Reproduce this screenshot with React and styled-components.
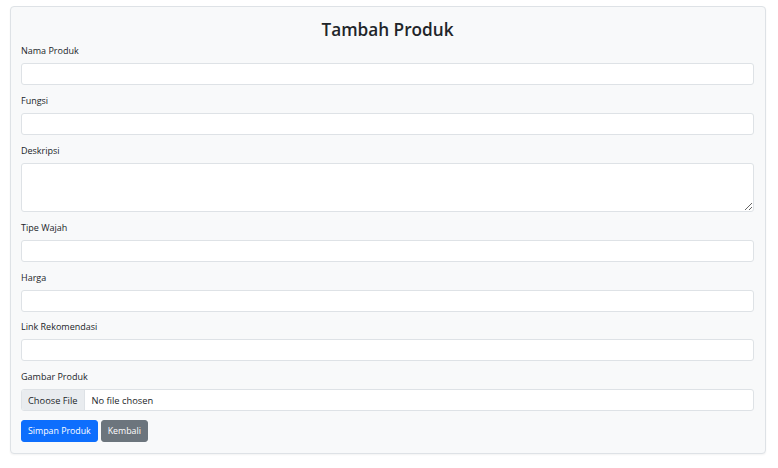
import React from 'react'
import styled, { createGlobalStyle } from 'styled-components'

const fields = [
  { id: 'nama', label: 'Nama Produk' },
  { id: 'fungsi', label: 'Fungsi' },
  { id: 'deskripsi', label: 'Deskripsi', textarea: true },
  { id: 'tipe', label: 'Tipe Wajah' },
  { id: 'harga', label: 'Harga' },
  { id: 'link', label: 'Link Rekomendasi' },
]

export default function App() {
  return (
    <>
      <GlobalStyle />
      <Page>
        <Card>
          <Title>Tambah Produk</Title>
          {fields.map((f) => (
            <Field key={f.id}>
              <Label htmlFor={f.id}>{f.label}</Label>
              {f.textarea ? <TextArea id={f.id} /> : <Input id={f.id} type='text' />}
            </Field>
          ))}
          <Field>
            <Label htmlFor='gambar'>Gambar Produk</Label>
            <FileInput id='gambar' type='file' />
          </Field>
          <Actions>
            <Button $variant='primary'>Simpan Produk</Button>
            <Button $variant='secondary'>Kembali</Button>
          </Actions>
        </Card>
      </Page>
    </>
  )
}

const GlobalStyle = createGlobalStyle`
  body {
    margin: 0;
    background: #fff;
    font-family: "Open Sans", "Noto Sans", sans-serif;
    color: #212529;
  }
  * { box-sizing: border-box; }
`

const Page = styled.div`
  padding: 6px 12px 15px 10px;
`

const Card = styled.form`
  background: #f8f9fa;
  border: 1px solid #dee2e6;
  border-radius: 4px;
  padding: 11px 11px 11px 10px;
  box-shadow: 0 1px 2px rgba(0, 0, 0, 0.05);
`

const Title = styled.h2`
  margin: 0 0 2px;
  text-align: center;
  font-size: 17.2px;
  line-height: 24px;
  font-weight: 600;
  color: #212529;
`

const Field = styled.div`
  display: flex;
  flex-direction: column;
  margin-bottom: 8.75px;
`

const Label = styled.label`
  font-size: 9px;
  line-height: 14px;
  color: #212529;
  margin-bottom: 5px;
`

const Input = styled.input`
  height: 22px;
  width: 100%;
  border: 1px solid #dee2e6;
  border-radius: 3px;
  background: #fff;
  font: inherit;
  font-size: 9.5px;
  padding: 0 8px;
  outline: none;
`

const TextArea = styled.textarea`
  height: 49.5px;
  width: 100%;
  border: 1px solid #dee2e6;
  border-radius: 3px;
  background: #fff;
  font: inherit;
  font-size: 9.5px;
  padding: 4px 8px;
  resize: vertical;
  outline: none;
`

const FileInput = styled.input`
  height: 22px;
  width: 100%;
  border: 1px solid #dee2e6;
  border-radius: 3px;
  background: #fff;
  font: inherit;
  font-size: 9.3px;
  color: #212529;
  padding: 0;
  overflow: hidden;

  &::file-selector-button {
    height: 100%;
    margin: 0 7px 0 0;
    padding: 0 6px;
    border: none;
    border-right: 1px solid #dee2e6;
    border-radius: 0;
    background: #e9ecef;
    color: #212529;
    font: inherit;
    font-size: 9.3px;
  }
`

const Actions = styled.div`
  display: flex;
  gap: 3px;
  margin-top: 1.5px;
`

const Button = styled.button`
  height: 22px;
  padding: 0 6px;
  border-radius: 3px;
  border: 1px solid ${(p) => (p.$variant === 'primary' ? '#0d6efd' : '#6c757d')};
  background: ${(p) => (p.$variant === 'primary' ? '#0d6efd' : '#6c757d')};
  color: #fff;
  font: inherit;
  font-size: 8.8px;
  cursor: pointer;
`
